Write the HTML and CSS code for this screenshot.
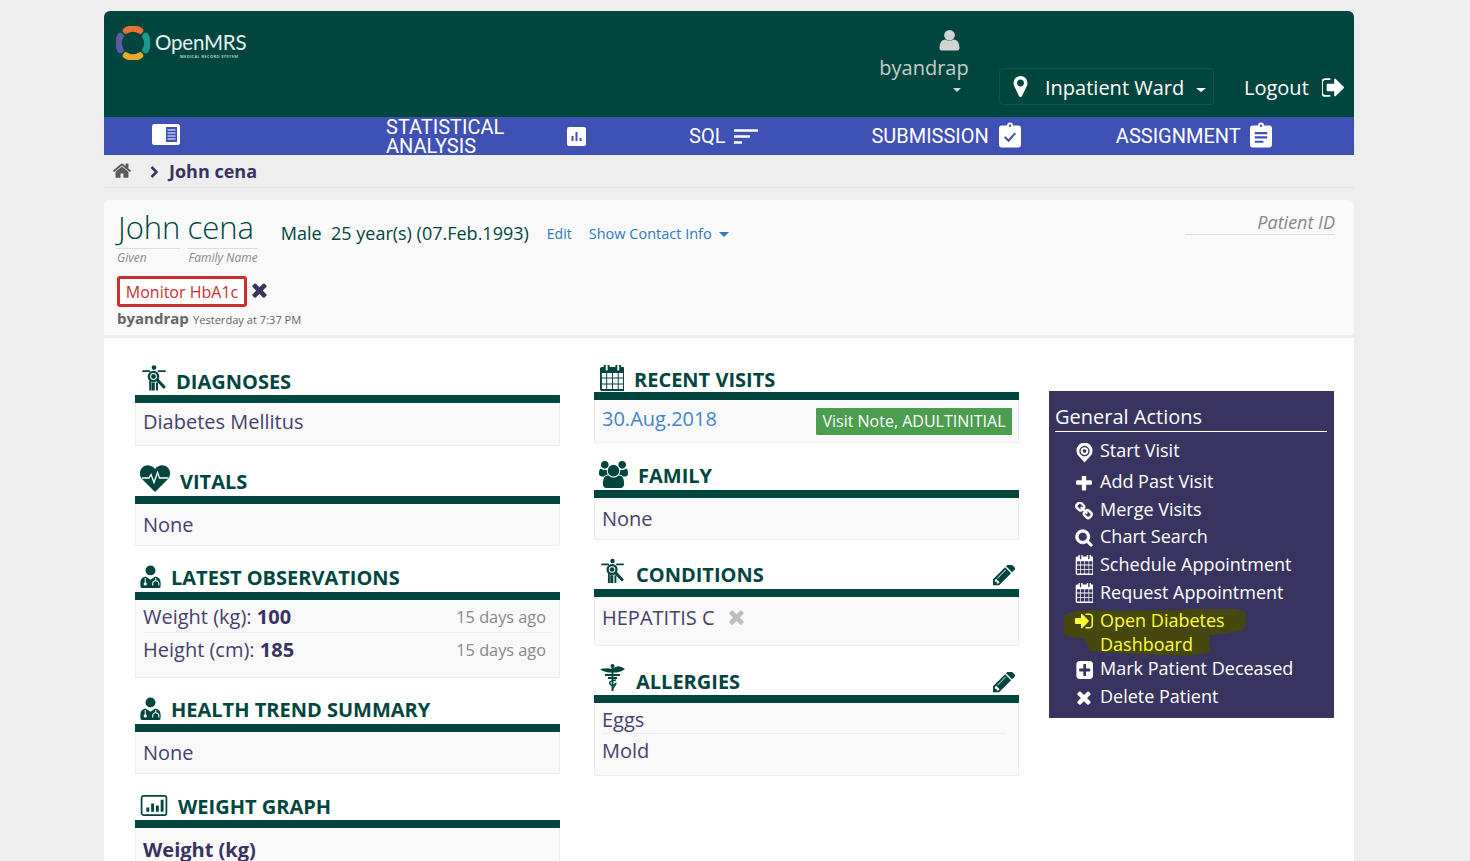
FILE: index.html
```html
<!DOCTYPE html>
<html lang="en">
<head>
<meta charset="utf-8">
<title>John cena - OpenMRS</title>
<link rel="stylesheet" href="styles.css">
</head>
<body>
<svg class="defs" width="0" height="0" aria-hidden="true">
  <defs>
    <symbol id="i-pencil" viewBox="0 0 1515 1515"><path d="M363 1280l91-91-235-235-91 91v107h128v128h107zm523-928q0-22-22-22-10 0-17 7l-542 542q-7 7-7 17 0 22 22 22 10 0 17-7l542-542q7-7 7-17zm-54-192l416 416-832 832h-416v-416zm683 96q0 53-37 90l-166 166-416-416 166-165q36-38 90-38 53 0 91 38l235 234q37 39 37 91z" fill="currentColor" transform="translate(0 -5)"/></symbol>
    <symbol id="i-times" viewBox="280 330 1240 1240"><path d="M1490 1322q0 40-28 68l-136 136q-28 28-68 28t-68-28l-294-294-294 294q-28 28-68 28t-68-28l-136-136q-28-28-28-68t28-68l294-294-294-294q-28-28-28-68t28-68l136-136q28-28 68-28t68 28l294 294 294-294q28-28 68-28t68 28l136 136q28 28 28 68t-28 68l-294 294 294 294q28 28 28 68z" fill="currentColor"/></symbol>
    <symbol id="i-cal" viewBox="0 128 1664 1664" preserveAspectRatio="none"><path d="M192 1664h288v-288h-288v288zm352 0h320v-288h-320v288zm-352-352h288v-320h-288v320zm352 0h320v-320h-320v320zm-352-384h288v-288h-288v288zm736 736h320v-288h-320v288zm-384-736h320v-288h-320v288zm768 736h288v-288h-288v288zm-384-352h320v-320h-320v320zm-352-864v-288q0-13-9.5-22.5t-22.5-9.5h-64q-13 0-22.5 9.5t-9.5 22.5v288q0 13 9.5 22.5t22.5 9.5h64q13 0 22.5-9.5t9.5-22.5zm736 864h288v-320h-288v320zm-384-384h320v-288h-320v288zm384 0h288v-288h-288v288zm32-480v-288q0-13-9.5-22.5t-22.5-9.5h-64q-13 0-22.5 9.5t-9.5 22.5v288q0 13 9.5 22.5t22.5 9.5h64q13 0 22.5-9.5t9.5-22.5zm384-64v1280q0 52-38 90t-90 38h-1408q-52 0-90-38t-38-90v-1280q0-52 38-90t90-38h128v-96q0-66 47-113t113-47h64q66 0 113 47t47 113v96h384v-96q0-66 47-113t113-47h64q66 0 113 47t47 113v96h128q52 0 90 38t38 90z" fill="currentColor"/></symbol>
    <symbol id="i-diag" viewBox="0 0 26 26">
      <circle cx="12" cy="2.6" r="2.3" fill="currentColor"/>
      <path d="M1 6.2h6.5M16.5 6.2H23" stroke="currentColor" stroke-width="1.8" stroke-linecap="round" fill="none"/>
      <circle cx="11.5" cy="11.5" r="4.6" fill="none" stroke="currentColor" stroke-width="2.4"/>
      <circle cx="11.5" cy="11.5" r="2.4" fill="currentColor"/>
      <path d="M9.600 17.500h3.200v8.100h-3.200zM14 17.500h2v8.100h-2zM7.200 15.500h2v10h-2z" fill="currentColor"/>
      <path d="M15.400 15l6.600 7" stroke="currentColor" stroke-width="3" stroke-linecap="round" fill="none"/>
    </symbol>
    <symbol id="i-doc" viewBox="0 0 22 24">
      <circle cx="11" cy="5.6" r="5.2" fill="currentColor"/>
      <path d="M2 24q-1.6 0-1.6-2v-3.5Q.4 13 6 12l5 3.5 5-3.5q5.6 1 5.6 6.500V22q0 2-1.600 2z" fill="currentColor"/>
      <circle cx="5.500" cy="19.800" r="1.700" fill="#fff"/>
      <path d="M16.500 13.500v3.500M13.300 21.500v-1.800a3.200 3.200 0 0 1 6.400 0v1.800" fill="none" stroke="#fff" stroke-width="1.100"/>
      <path d="M5.500 13.500v5" fill="none" stroke="#fff" stroke-width="1.100"/>
    </symbol>
  </defs>
</svg>

<div class="page">
  <header class="topbar">
    <a class="logo">
      <svg class="logo-mark" viewBox="0 0 34 34">
        <path d="M10 4.500A14 14 0 0 1 24 4.500" fill="none" stroke="#e57333" stroke-width="6.500" stroke-linecap="round"/>
        <path d="M29.500 10A14 14 0 0 1 29.500 24" fill="none" stroke="#1d9a8e" stroke-width="6.500" stroke-linecap="round"/>
        <path d="M24 29.500A14 14 0 0 1 10 29.500" fill="none" stroke="#eaa92a" stroke-width="6.500" stroke-linecap="round"/>
        <path d="M4.500 24A14 14 0 0 1 4.500 10" fill="none" stroke="#5d5aa6" stroke-width="6.500" stroke-linecap="round"/>
      </svg>
      <span class="logo-text">
        <span class="logo-name">OpenMRS</span>
        <span class="logo-sub">MEDICAL RECORD SYSTEM</span>
      </span>
    </a>
    <div class="user">
      <svg class="user-icon" viewBox="0 0 22 22"><circle cx="11" cy="6" r="5.600"/><path d="M0.500 19q0-7.500 6-8.500 4.500 2.500 9 0 6 1 6 8.500 0 3-3 3H3.500q-3 0-3-3z"/></svg>
      <span class="user-name">byandrap</span>
      <span class="caret caret-user"></span>
    </div>
    <div class="location">
      <svg class="loc-icon" viewBox="384 128 1024 1536"><path d="M1152 640q0-106-75-181t-181-75-181 75-75 181 75 181 181 75 181-75 75-181zm256 0q0 109-33 179l-364 774q-16 33-47.500 52t-67.500 19-67.500-19-46.500-52l-365-774q-33-70-33-179 0-212 150-362t362-150 362 150 150 362z" fill="#fff"/></svg>
      <span class="loc-name">Inpatient Ward</span>
      <span class="caret caret-loc"></span>
    </div>
    <a class="logout">
      <span>Logout</span>
      <svg class="logout-icon" viewBox="128 256 1504 1280"><path d="M704 1440q0 4 1 20t.5 26.500-3 23.500-10 19.500-20.500 6.500h-320q-119 0-203.500-84.500t-84.500-203.500v-704q0-119 84.500-203.500t203.500-84.500h320q13 0 22.500 9.500t9.500 22.500q0 4 1 20t.5 26.500-3 23.500-10 19.500-20.500 6.500h-320q-66 0-113 47t-47 113v704q0 66 47 113t113 47h312l11.500 1 11.500 3 8 5.500 7 9 2 13.500zm928-544q0 26-19 45l-544 544q-19 19-45 19t-45-19-19-45v-288h-448q-26 0-45-19t-19-45v-384q0-26 19-45t45-19h448v-288q0-26 19-45t45-19 45 19l544 544q19 19 19 45z" fill="#fff"/></svg>
    </a>
  </header>

  <nav class="navbar">
    <a class="nav-item nav-menu">
      <svg class="nav-sidebar" viewBox="0 0 28 21"><rect width="28" height="21" rx="2.500" fill="#fff"/><rect x="14" y="3" width="11" height="15" fill="#3f51b5"/><path d="M15.500 6h8M15.500 9h8M15.500 12h8M15.500 15h8" stroke="#fff" stroke-width="1.200"/></svg>
    </a>
    <a class="nav-item nav-stat">
      <span class="nav-two">STATISTICAL ANALYSIS</span>
      <svg class="nav-chart" viewBox="0 0 19 19"><rect width="19" height="19" rx="2" fill="#fff"/><path d="M5.500 14V9M9.500 14V5M13.500 14v-3" stroke="#3f51b5" stroke-width="2"/></svg>
    </a>
    <a class="nav-item nav-sql">
      <span>SQL</span>
      <svg class="nav-lines" viewBox="0 0 24 15"><path d="M0 1.500h24M0 7.500h16M0 13.500h8" stroke="#fff" stroke-width="2.400"/></svg>
    </a>
    <a class="nav-item nav-sub">
      <span>SUBMISSION</span>
      <svg class="nav-clip" viewBox="0 0 23 26"><path d="M3 3h5.500a3 3 0 0 1 6 0H20q3 0 3 3v17q0 3-3 3H3q-3 0-3-3V6q0-3 3-3z" fill="#fff"/><circle cx="11.500" cy="3.400" r="1.300" fill="#3f51b5"/><path d="M6 15l4 4 7-8" fill="none" stroke="#3f51b5" stroke-width="2.200"/></svg>
    </a>
    <a class="nav-item nav-asg">
      <span>ASSIGNMENT</span>
      <svg class="nav-clip" viewBox="0 0 23 26"><path d="M3 3h5.500a3 3 0 0 1 6 0H20q3 0 3 3v17q0 3-3 3H3q-3 0-3-3V6q0-3 3-3z" fill="#fff"/><circle cx="11.500" cy="3.400" r="1.300" fill="#3f51b5"/><path d="M5 11h13M5 15.500h13M5 20h9" fill="none" stroke="#3f51b5" stroke-width="2.200"/></svg>
    </a>
  </nav>

  <div class="crumbs">
    <svg class="crumb-home" viewBox="0 128 1792 1408"><path d="M1472 992v480q0 26-19 45t-45 19h-384v-384h-256v384h-384q-26 0-45-19t-19-45v-480q0-1 .5-3t.5-3l575-474 575 474q1 2 1 6zm223-69l-62 74q-8 9-21 11h-3q-13 0-21-7l-692-577-692 577q-12 8-24 7-13-2-21-11l-62-74q-8-10-7-23.500t11-21.500l719-599q32-26 76-26t76 26l244 204v-195q0-14 9-23t23-9h192q14 0 23 9t9 23v408l219 182q10 8 11 21.500t-7 23.500z" fill="currentColor"/></svg>
    <svg class="crumb-chev" viewBox="0 0 8 12"><path d="M1.500 1l5 5-5 5" fill="none" stroke="currentColor" stroke-width="2.600"/></svg>
    <span class="crumb-name">John cena</span>
  </div>

  <div class="patient">
    <div class="patient-top">
      <div class="pname">
        <span class="pname-part pname-given"><span class="pname-val">John</span><span class="pname-lab">Given</span></span>
        <span class="pname-part pname-family"><span class="pname-val">cena</span><span class="pname-lab">Family Name</span></span>
      </div>
      <div class="pinfo">Male&nbsp; 25 year(s) (07.Feb.1993)</div>
      <a class="plink plink-edit">Edit</a>
      <a class="plink plink-contact">Show Contact Info <span class="caret caret-blue"></span></a>
      <div class="pid">Patient ID</div>
    </div>
    <div class="note-row">
      <span class="note">Monitor HbA1c</span>
      <svg class="note-x"><use href="#i-times"/></svg>
    </div>
    <div class="note-by"><b>byandrap</b> <span>Yesterday at 7:37 PM</span></div>
  </div>

  <main class="content">
    <div class="col">
      <section class="sec">
        <h2 class="sec-title h33"><svg class="ti ti-diag"><use href="#i-diag"/></svg>DIAGNOSES</h2>
        <div class="sec-body b43"><div class="val">Diabetes Mellitus</div></div>
      </section>
      <section class="sec">
        <h2 class="sec-title h34 pb2">
          <svg class="ti ti-heart" viewBox="0 0 30 27"><path d="M15 27L2.500 14.500C-1 11-.8 5.500 2.300 2.500 6-1 11.500-.3 15 4c3.500-4.300 9-5 12.700-1.500 3.100 3 3.300 8.500-.2 12z" fill="currentColor"/><path d="M2 13h7l2-3.500 3 8 3.500-10 2 5.500h9" fill="none" stroke="#fff" stroke-width="1.300"/></svg>VITALS</h2>
        <div class="sec-body b42"><div class="val val-low">None</div></div>
      </section>
      <section class="sec">
        <h2 class="sec-title pb2"><svg class="ti ti-doc"><use href="#i-doc"/></svg>LATEST OBSERVATIONS</h2>
        <div class="sec-body b78">
          <div class="obs obs-line"><span>Weight (kg): <b>100</b></span><span class="ago">15 days ago</span></div>
          <div class="obs"><span>Height (cm): <b>185</b></span><span class="ago">15 days ago</span></div>
        </div>
      </section>
      <section class="sec">
        <h2 class="sec-title pb2"><svg class="ti ti-doc"><use href="#i-doc"/></svg>HEALTH TREND SUMMARY</h2>
        <div class="sec-body b42"><div class="val val-low">None</div></div>
      </section>
      <section class="sec">
        <h2 class="sec-title"><svg class="ti ti-graph" viewBox="0 0 28 22"><rect x="1" y="1" width="26" height="20" rx="2" fill="none" stroke="currentColor" stroke-width="1.800"/><path d="M6 13h3v4.500H6zM11 9h3v8.500h-3zM16 11h3v6.500h-3zM21 5h3v12.500h-3z" fill="currentColor"/></svg>WEIGHT GRAPH</h2>
        <div class="sec-body"><div class="val val-b">Weight (kg)</div></div>
      </section>
    </div>

    <div class="col col-mid">
      <section class="sec">
        <h2 class="sec-title pb0"><svg class="ti ti-cal"><use href="#i-cal"/></svg>RECENT VISITS</h2>
        <div class="sec-body b43 visit">
          <a class="visit-date">30.Aug.2018</a>
          <span class="visit-tag">Visit Note, ADULTINITIAL</span>
        </div>
      </section>
      <section class="sec">
        <h2 class="sec-title h31 pb2"><svg class="ti ti-users" viewBox="0 128 1920 1536"><path d="M593 896q-162 5-265 128h-134q-82 0-138-40.500t-56-118.500q0-353 124-353 6 0 43.500 21t97.500 42.500 119 21.500q67 0 133-23-5 37-5 66 0 139 81 256zm1071 637q0 120-73 189.500t-194 69.500h-874q-121 0-194-69.500t-73-189.500q0-53 3.500-103.500t14-109 26.500-108.500 43-97.500 62-81 85.500-53.500 111.500-20q10 0 43 21.500t73 48 107 48 135 21.500 135-21.500 107-48 73-48 43-21.500q61 0 111.500 20t85.500 53.500 62 81 43 97.500 26.500 108.500 14 109 3.500 103.500zm-1024-1277q0 106-75 181t-181 75-181-75-75-181 75-181 181-75 181 75 75 181zm704 384q0 159-112.500 271.500t-271.500 112.500-271.500-112.500-112.500-271.500 112.500-271.500 271.500-112.500 271.500 112.500 112.500 271.500zm576 225q0 78-56 118.500t-138 40.500h-134q-103-123-265-128 81-117 81-256 0-29-5-66 66 23 133 23 59 0 119-21.500t97.500-42.500 43.500-21q124 0 124 353zm-128-609q0 106-75 181t-181 75-181-75-75-181 75-181 181-75 181 75 75 181z" fill="currentColor"/></svg>FAMILY</h2>
        <div class="sec-body b42"><div class="val val-low">None</div></div>
      </section>
      <section class="sec">
        <h2 class="sec-title h33 pb2"><svg class="ti ti-diag2"><use href="#i-diag"/></svg>CONDITIONS<svg class="edit"><use href="#i-pencil"/></svg></h2>
        <div class="sec-body b49"><div class="val cond">HEPATITIS C<svg class="cond-x"><use href="#i-times"/></svg></div></div>
      </section>
      <section class="sec">
        <h2 class="sec-title h33"><svg class="ti ti-cad" viewBox="0 0 25 27"><path d="M0 5q7-1.500 12.500 0Q18-.5 25 5q-3 3-8 3.500h-9Q3 8 0 5z" fill="currentColor"/><circle cx="12.500" cy="2" r="2" fill="currentColor"/><path d="M12.500 3v24" stroke="currentColor" stroke-width="1.800"/><path d="M5 11h15M8 14h9" stroke="currentColor" stroke-width="2.200"/><path d="M16 16q-8 1-6 4t5 0-3 6" fill="none" stroke="currentColor" stroke-width="1.400"/></svg>ALLERGIES<svg class="edit"><use href="#i-pencil"/></svg></h2>
        <div class="sec-body b73">
          <div class="allergy allergy-line">Eggs</div>
          <div class="allergy">Mold</div>
        </div>
      </section>
    </div>

    <aside class="actions">
      <h3 class="actions-title">General Actions</h3>
      <ul class="actions-list">
        <li class="act act-start">
          <svg class="ai ai-start" viewBox="0 0 18 20"><path d="M9 20L3 13.500A8.500 8.500 0 1 1 15 13.500z" fill="#fff"/><circle cx="9" cy="8" r="4.800" fill="none" stroke="#38345f" stroke-width="1.500"/><circle cx="9" cy="8" r="1.900" fill="#38345f"/></svg>
          <span>Start Visit</span></li>
        <li class="act">
          <svg class="ai ai-plus" viewBox="192 192 1408 1408"><path d="M1600 736v192q0 40-28 68t-68 28h-416v416q0 40-28 68t-68 28h-192q-40 0-68-28t-28-68v-416h-416q-40 0-68-28t-28-68v-192q0-40 28-68t68-28h416v-416q0-40 28-68t68-28h192q40 0 68 28t28 68v416h416q40 0 68 28t28 68z" fill="#fff" transform="translate(0 -64)"/></svg>
          <span>Add Past Visit</span></li>
        <li class="act act-tight">
          <svg class="ai ai-low" viewBox="64 192 1664 1664"><path d="M1520 1216q0-40-28-68l-208-208q-28-28-68-28-42 0-72 32 3 3 19 18.500t21.500 21.500 15 19 13 25.500 3.500 27.500q0 40-28 68t-68 28q-15 0-27.500-3.500t-25.500-13-19-15-21.500-21.500-18.500-19q-33 31-33 73 0 40 28 68l206 207q27 27 68 27 40 0 68-26l147-146q28-28 28-67zm-703-705q0-40-28-68l-206-207q-28-28-68-28-39 0-68 27l-147 146q-28 28-28 67 0 40 28 68l208 208q27 27 68 27 42 0 72-31-3-3-19-18.500t-21.500-21.500-15-19-13-25.500-3.500-27.500q0-40 28-68t68-28q15 0 27.500 3.500t25.500 13 19 15 21.500 21.500 18.500 19q33-31 33-73zm895 705q0 120-85 203l-147 146q-83 83-203 83-121 0-204-85l-206-207q-83-83-83-203 0-123 88-209l-88-88q-86 88-208 88-120 0-204-84l-208-208q-84-84-84-204t85-203l147-146q83-83 203-83 121 0 204 85l206 207q83 83 83 203 0 123-88 209l88 88q86-88 208-88 120 0 204 84l208 208q84 84 84 204z" fill="#fff" stroke="#fff" stroke-width="50" transform="translate(0 128)"/></svg>
          <span>Merge Visits</span></li>
        <li class="act">
          <svg class="ai ai-low" viewBox="0 128 1792 1664"><path d="M1216 832q0-185-131.500-316.500t-316.500-131.500-316.500 131.500-131.500 316.500 131.500 316.500 316.500 131.500 316.500-131.500 131.500-316.500zm512 832q0 52-38 90t-90 38q-54 0-90-38l-343-342q-179 124-399 124-143 0-273.500-55.500t-225-150-150-225-55.500-273.500 55.500-273.500 150-225 225-150 273.500-55.500 273.500 55.500 225 150 150 225 55.500 273.500q0 220-124 399l343 343q37 37 37 90z" fill="#fff" stroke="#fff" stroke-width="70"/></svg>
          <span>Chart Search</span></li>
        <li class="act"><svg class="ai ai-cal"><use href="#i-cal"/></svg><span>Schedule Appointment</span></li>
        <li class="act"><svg class="ai ai-cal"><use href="#i-cal"/></svg><span>Request Appointment</span></li>
        <li class="act act-hl">
          <svg class="hl-blob" viewBox="0 0 182 50" preserveAspectRatio="none"><path d="M1 8L12 4 24 3 60 4 140 2 172 2 180 5 181 14 178 22 160 25 144 27 145 44 124 48 70 46 26 43 21 30 8 29 1 26z" fill="#46480f" stroke="#46480f" stroke-width="2" stroke-linejoin="round"/></svg>
          <svg class="ai ai-hl" viewBox="0 256 1536 1280"><path d="M1184 896q0 26-19 45l-544 544q-19 19-45 19t-45-19-19-45v-288h-448q-26 0-45-19t-19-45v-384q0-26 19-45t45-19h448v-288q0-26 19-45t45-19 45 19l544 544q19 19 19 45zm352-352v704q0 119-84.500 203.500t-203.500 84.500h-320q-13 0-22.500-9.500t-9.500-22.500q0-4-1-20t-.5-26.500 3-23.500 10-19.500 20.500-6.500h320q66 0 113-47t47-113v-704q0-66-47-113t-113-47h-312l-11.500-1-11.500-3-8-5.500-7-9-2-13.500q0-4-1-20t-.5-26.500 3-23.500 10-19.500 20.500-6.500h320q119 0 203.500 84.500t84.500 203.500z" fill="#ffff33"/></svg>
          <span class="hl-text">Open Diabetes Dashboard</span></li>
        <li class="act">
          <svg class="ai ai-low" viewBox="0 128 1664 1536" preserveAspectRatio="none"><path d="M1408 960v-128q0-26-19-45t-45-19h-320v-320q0-26-19-45t-45-19h-128q-26 0-45 19t-19 45v320h-320q-26 0-45 19t-19 45v128q0 26 19 45t45 19h320v320q0 26 19 45t45 19h128q26 0 45-19t19-45v-320h320q26 0 45-19t19-45zm256-544v960q0 119-84.500 203.500t-203.500 84.500h-960q-119 0-203.500-84.500t-84.500-203.500v-960q0-119 84.500-203.500t203.500-84.500h960q119 0 203.500 84.500t84.500 203.500z" fill="#fff"/></svg>
          <span>Mark Patient Deceased</span></li>
        <li class="act"><svg class="ai ai-x"><use href="#i-times"/></svg><span>Delete Patient</span></li>
      </ul>
    </aside>
  </main>
</div>
</body>
</html>
```

FILE: styles.css
```css
* { box-sizing: border-box; }
html, body { height: 100%; overflow: hidden; }
body {
  margin: 0;
  background: #eeeeee;
  font-family: "Open Sans", "Liberation Sans", sans-serif;
  color: #38345f;
}
.defs { position: absolute; }
.page { width: 1250px; margin: 11px 0 0 104px; }

/* header */
.topbar {
  height: 106px;
  display: flex;
  align-items: flex-start;
  background: #00463f;
  border-radius: 6px 6px 0 0;
  color: #fff;
  padding: 0 10px 0 12px;
}
.logo { display: flex; align-items: center; margin-top: 15px; width: 130px; flex: none; }
.logo-mark { width: 34px; height: 34px; flex: none; }
.logo-text { display: flex; flex-direction: column; margin-left: 5px; margin-top: 2px; }
.logo-name { font-family: "Lato", sans-serif; font-weight: 400; font-size: 20.500px; line-height: 24px; color: #e4f2ef; letter-spacing: -0.2px; }
.logo-sub { font-size: 4px; line-height: 5px; font-weight: 600; letter-spacing: 0.38px; margin-left: 25px; color: #cfe0dc; white-space: nowrap; }

.user { display: flex; flex-direction: column; align-items: center; flex: none; width: 90px; margin-left: 633px; margin-top: 18px; color: #c6cdca; }
.user-icon { width: 21px; height: 22px; fill: #cfd3d1; margin-left: 50px; }
.user-name { font-size: 20px; line-height: 27px; margin-top: 3px; font-weight: 400; }
.caret { display: inline-block; width: 0; height: 0; border-left: 4px solid transparent; border-right: 4px solid transparent; border-top: 4px solid currentColor; }
.caret-user { margin-left: 66px; margin-top: 7px; color: #d4d8d6; }

.location {
  display: flex; align-items: center;
  flex: none;
  width: 215px; height: 37px;
  margin: 57px 0 0 30px;
  padding-left: 13px;
  border: 1px solid #07574f;
  border-radius: 4px;
  font-size: 20px;
  color: #fff;
}
.loc-name { white-space: nowrap; padding-top: 2px; }
.loc-icon { width: 15px; height: 21px; margin-right: 17px; flex: none; }
.caret-loc { margin-left: 12px; margin-top: 6px; border-left-width: 5px; border-right-width: 5px; }
.logout { display: flex; align-items: center; margin: 62px 0 0 30px; font-size: 20px; line-height: 30px; color: #fff; }
.logout-icon { width: 22px; height: 19px; margin-left: 13px; margin-top: -2px; }

/* nav */
.navbar { height: 38px; display: flex; align-items: center; background: #3f51b5; color: #fff; font-family: Roboto, "Liberation Sans", sans-serif; font-size: 20px; padding-left: 48px; }
.nav-item { display: flex; align-items: center; }
.nav-sidebar { width: 28px; height: 21px; margin-top: -3px; display: block; }
.nav-stat { margin-left: 206px; }
.nav-two { width: 130px; line-height: 19px; display: block; padding-top: 1px; }
.nav-chart { width: 19px; height: 19px; margin-left: 51px; }
.nav-sql { margin-left: 103px; }
.nav-lines { width: 24px; height: 15px; margin-left: 9px; }
.nav-sub { margin-left: 113px; }
.nav-asg { margin-left: 95px; }
.nav-clip { width: 22px; height: 26px; margin-left: 10px; margin-top: -3px; }
.nav-asg .nav-clip { margin-left: 9px; }

/* breadcrumb */
.crumbs { height: 33px; display: flex; align-items: center; padding-left: 8px; border-bottom: 1px solid #e2e2e2; color: #55525f; }
.crumb-home { width: 20px; height: 16px; color: #5a5a5a; margin-top: -3px; }
.crumb-chev { width: 8px; height: 12px; margin-left: 18px; color: #38345f; margin-top: 2px; }
.crumb-name { font-size: 18px; font-weight: 700; color: #38345f; margin-left: 11px; }

/* patient header */
.patient { height: 135px; margin-top: 12px; padding: 0 12px; background: #f9f9f9; border-radius: 6px 6px 0 0; }
.patient-top { display: flex; align-items: flex-start; height: 76px; }
.pname { display: flex; margin-top: 9px; }
.pname-part { display: flex; flex-direction: column; }
.pname-family { margin-left: 7px; }
.pname-val { font-size: 31px; font-weight: 300; line-height: 37px; padding-bottom: 2px; color: #00463f; border-bottom: 1px solid #ddd; }
.pname-given .pname-val { padding-left: 2px; }
.pname-lab { font-size: 12px; font-style: italic; line-height: 18px; color: #888; padding-left: 1px; }
.pinfo { font-size: 18px; color: #00463f; margin: 20px 0 0 23px; line-height: 26px; font-weight: 400; white-space: nowrap; }
.plink { font-size: 14.500px; color: #2f7ab8; margin-top: 24px; line-height: 19px; white-space: nowrap; }
.plink-edit { margin-left: 18px; font-size: 14px; }
.plink-contact { margin-left: 17px; }
.caret-blue { border-left-width: 5px; border-right-width: 5px; border-top-width: 5px; margin-left: 4px; vertical-align: 2px; color: #2f7ab8; }
.pid { margin-left: auto; width: 150px; margin-right: 7px; margin-top: 10px; text-align: right; font-style: italic; font-size: 18px; line-height: 24px; color: #888; border-bottom: 1px solid #ddd; }
.note-row { display: flex; align-items: flex-start; padding-left: 1px; }
.note { width: 130px; height: 31px; display: flex; align-items: center; justify-content: center; border: 3px solid #c9302c; border-radius: 3px; background: #fff; color: #c9302c; font-size: 16px; white-space: nowrap; }
.note-x { width: 15px; height: 15px; margin: 7px 0 0 5px; color: #38345f; display: block; }
.note-by { padding-left: 1px; line-height: 21px; color: #666; margin-top: 1px; }
.note-by b { font-size: 15px; font-weight: 700; }
.note-by span { font-size: 11.100px; }

/* content */
.content { background: #fff; border-top: 3px solid #eeeeee; display: grid; grid-template-columns: 425px 459px 315px; padding: 24px 0 0 31px; height: 600px; align-items: start; }
.col { min-width: 0; }
.col-mid { padding-left: 34px; }
.sec { margin-bottom: 16px; }
.sec-title { display: flex; align-items: flex-end; height: 38px; margin: 0; padding: 0 0 1px 5px; border-bottom: 8px solid #00463f; font-size: 20px; line-height: 24px; font-weight: 700; color: #00463f; white-space: nowrap; }
.pb0 { padding-bottom: 0; }
.pb2 { padding-bottom: 2px; }
.h31 { height: 39px; }
.h33 { height: 41px; }
.h34 { height: 42px; }
.ti { flex: none; display: block; color: #00463f; }
.ti-diag { width: 26px; height: 26px; margin: 0 8px 3px 2px; }
.ti-diag2 { width: 25px; height: 26px; margin: 0 10px 3px 2px; }
.ti-heart { width: 30px; height: 27px; margin: 0 10px 2px 0; }
.ti-doc { width: 21px; height: 23px; margin: 0 10px 2px 0; }
.ti-graph { width: 28px; height: 21px; margin: 0 10px 3px 0; }
.ti-cal { width: 25px; height: 26px; margin: 0 10px 1px 0; }
.ti-users { width: 29px; height: 27px; margin: 0 10px 0 0; }
.ti-cad { width: 25px; height: 27px; margin: 0 11px 3px 1px; }
.edit { width: 22px; height: 22px; margin: 0 4px 0 auto; color: #00463f; display: block; }
.sec-body { background: #f9f9f9; border: 1px solid #eeeeee; border-top: 0; padding: 0 7px; font-size: 20px; font-weight: 400; line-height: 27px; color: #45416b; }
.b42 { height: 42px; }
.b43 { height: 43px; }
.b49 { height: 49px; }
.b73 { height: 73px; }
.b78 { height: 78px; }
.val { padding-top: 5px; }
.val-low { padding-top: 7px; }
.val-b { font-weight: 700; padding-top: 8px; color: #38345f; }
.obs { display: flex; justify-content: space-between; padding-right: 6px; height: 33px; align-items: center; }
.obs b { font-weight: 700; color: #38345f; }
.obs-line { border-bottom: 1px solid #eee; }
.ago { font-size: 16.300px; color: #888; font-weight: 400; padding-top: 2px; }
.visit { display: flex; justify-content: space-between; align-items: flex-start; padding: 4px 6px 0 7px; }
.visit-date { color: #4384cc; line-height: 30px; }
.visit-tag { background: #4c9e4f; color: #fff; font-size: 16px; font-weight: 400; line-height: 27px; height: 27px; padding: 0 6.500px; border-radius: 1px; margin-top: 4px; }
.cond { display: flex; align-items: center; padding-top: 7px; }
.cond-x { width: 15px; height: 15px; margin-left: 14px; color: #bdbdbd; display: block; }
.allergy { line-height: 27px; height: 29px; padding-top: 3px; }
.allergy-line { height: 31px; border-bottom: 1px solid #eee; margin-right: 5px; padding-top: 3px; }

/* actions */
.actions { background: #38345f; margin-left: 30px; width: 285px; margin-top: 29px; height: 327px; padding: 0 7px 0 6px; color: #fff; }
.actions-title { margin: 0; font-size: 20px; font-weight: 400; line-height: 27px; padding-top: 12px; height: 41px; border-bottom: 1px solid #fff; }
.actions-list { list-style: none; margin: 0; padding: 6px 0 0 20px; font-size: 18px; line-height: 24px; }
.act { display: flex; align-items: flex-start; margin-bottom: 4px; position: relative; }
.act-start { margin-bottom: 6px; }
.act-tight { margin-bottom: 3px; }
.act-hl { margin-bottom: 0; color: #ffff33; }
.ai { width: 18px; height: 18px; flex: none; margin: 4px 7px 0 0; color: #fff; display: block; }
.ai-start { width: 17px; height: 20px; margin: 5px 7px 0 1px; }
.ai-plus { width: 16px; height: 16px; margin: 7px 8px 0 1px; }
.ai-low { margin-top: 5px; }
.ai-cal { height: 20px; margin-top: 3px; }
.hl-text { width: 170px; position: relative; }
.ai-hl { position: relative; margin-top: 5px; height: 16px; }
.hl-blob { position: absolute; left: -11px; top: 0; width: 182px; height: 49px; }
.ai-x { width: 14px; height: 14px; margin: 7px 9px 0 2px; }
```
